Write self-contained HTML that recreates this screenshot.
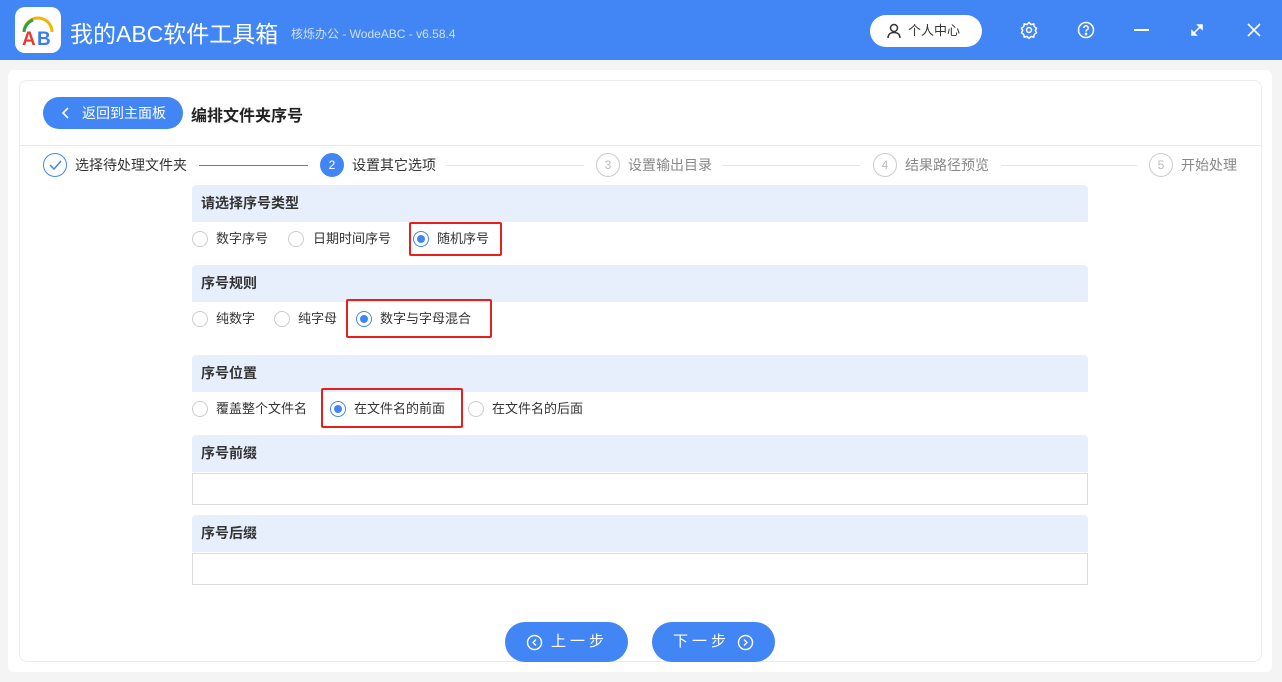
<!DOCTYPE html>
<html><head><meta charset="utf-8"><style>
*{margin:0;padding:0;box-sizing:border-box}
body{width:1282px;height:682px;background:#f4f4f4;font-family:"Liberation Sans","Noto Sans CJK SC",sans-serif;position:relative;overflow:hidden;color:#333}
.abs{position:absolute}
.top{left:0;top:0;width:1282px;height:60px;background:#4286f5}
.logo{left:15px;top:7px;width:46px;height:46px;background:#fff;border-radius:10px}
.title{left:70px;top:15px;color:#fff;font-size:23px}
.sub{left:291px;top:25px;color:#cfe0fc;font-size:12px}
.user{left:870px;top:15px;width:112px;height:32px;background:#fff;border-radius:16px;font-size:13px;color:#333;line-height:32px;padding-left:38px}
.card{left:8px;top:70px;width:1264px;height:602px;background:#fff;border-radius:6px}
.inner{left:19px;top:80px;width:1243px;height:582px;border:1px solid #ececec;border-radius:8px}
.back{left:43px;top:97px;width:140px;height:32px;background:#4286f5;border-radius:16px;color:#fff;font-size:14px;line-height:32px;padding-left:39px}
.h{left:191px;top:102px;font-size:16px;font-weight:bold;color:#222}
.hr{left:20px;top:145px;width:1241px;height:1px;background:#ececec}
.step{top:154px;font-size:14px;line-height:22px}
.circ{top:153px;width:24px;height:24px;border-radius:50%;border:1px solid #ccc;font-size:12px;line-height:22px;text-align:center;color:#bbb}
.ln{top:165px;height:1px;background:#e6e6e6}
.sec{left:192px;width:896px;height:37px;background:#e8effc;font-size:14px;font-weight:bold;color:#333;line-height:37px;padding-left:9px;border-radius:4px 4px 0 0}
.opt{font-size:13px;color:#333;line-height:20px}
.rad{width:16px;height:16px;border-radius:50%;border:1px solid #ccc;background:#fff}
.rad.on{border-color:#4286f5}
.rad.on::after{content:"";position:absolute;left:3px;top:3px;width:8px;height:8px;border-radius:50%;background:#4286f5}
.red{border:2px solid #e8201c;border-radius:2px}
.inp{left:192px;width:896px;height:32px;border:1px solid #ddd;background:#fff}
.btn{top:622px;width:123px;height:40px;background:#4286f5;border-radius:20px;color:#fff;font-size:15px;line-height:40px;letter-spacing:4px}
</style></head><body>
<div class="abs top"></div>
<div class="abs logo"><svg width="46" height="46"><path d="M9 25 A14 14 0 0 1 37 25" stroke="#f2b600" stroke-width="3" fill="none"/><path d="M9 25 A14 14 0 0 1 18 13" stroke="#2ca24c" stroke-width="3" fill="none"/><text x="7" y="38" font-size="19" font-weight="bold" fill="#e83a2f" font-family="Liberation Sans">A</text><text x="22" y="38" font-size="19" font-weight="bold" fill="#3b7df0" font-family="Liberation Sans">B</text></svg></div>
<div class="abs title">我的ABC软件工具箱</div>
<div class="abs sub">核烁办公 - WodeABC - v6.58.4</div>
<div class="abs user">个人中心</div>
<svg class="abs" style="left:886px;top:23px" width="16" height="16" fill="none" stroke="#333" stroke-width="1.5"><circle cx="8" cy="5" r="3.5"/><path d="M2 15c0-4 3-5.5 6-5.5s6 1.5 6 5.5"/></svg>
<svg class="abs" style="left:1020px;top:21px" width="18" height="18" fill="none" stroke="#fff" stroke-width="1.5"><circle cx="9" cy="9" r="2.5"/><path d="M9 1.5l2 2 2.7-.6.6 2.7 2.2 1.6-1.2 2.3 1.2 2.3-2.2 1.6-.6 2.7-2.7-.6-2 2-2-2-2.7.6-.6-2.7-2.2-1.6 1.2-2.3-1.2-2.3 2.2-1.6.6-2.7 2.7.6z"/></svg>
<svg class="abs" style="left:1077px;top:21px" width="18" height="18" fill="none" stroke="#fff" stroke-width="1.5"><circle cx="9" cy="9" r="7.5"/><path d="M6.8 7a2.2 2.2 0 1 1 3 2c-.7.3-.8.8-.8 1.6"/><circle cx="9" cy="13" r=".6" fill="#fff"/></svg>
<div class="abs" style="left:1134px;top:29px;width:15px;height:2px;background:#fff"></div>
<svg class="abs" style="left:1190px;top:23px" width="14" height="14" stroke="#fff" stroke-width="1.5" fill="#fff"><path d="M2 12L12 2"/><path d="M2 12v-4l4 4z"/><path d="M12 2v4l-4-4z"/></svg>
<svg class="abs" style="left:1246px;top:22px" width="16" height="16" stroke="#fff" stroke-width="1.6"><path d="M2 2l12 12M14 2L2 14"/></svg>
<div class="abs card"></div>
<div class="abs inner"></div>
<div class="abs back">返回到主面板</div>
<svg class="abs" style="left:61px;top:106px" width="10" height="14" fill="none" stroke="#fff" stroke-width="1.6"><path d="M7 2L2 7l5 5"/></svg>
<div class="abs h">编排文件夹序号</div>
<div class="abs hr"></div>
<div class="abs circ" style="left:43px;border-color:#4286f5"><svg width="22" height="22" fill="none" stroke="#4286f5" stroke-width="1.5"><path d="M6 11l4 4 7-8"/></svg></div>
<div class="abs step" style="left:75px">选择待处理文件夹</div>
<div class="abs ln" style="left:199px;width:109px;background:#4286f5"></div>
<div class="abs circ" style="left:320px;background:#4286f5;border-color:#4286f5;color:#fff">2</div>
<div class="abs step" style="left:352px">设置其它选项</div>
<div class="abs ln" style="left:446px;width:138px"></div>
<div class="abs circ" style="left:596px">3</div>
<div class="abs step" style="left:628px;color:#888">设置输出目录</div>
<div class="abs ln" style="left:722px;width:138px"></div>
<div class="abs circ" style="left:873px">4</div>
<div class="abs step" style="left:905px;color:#888">结果路径预览</div>
<div class="abs ln" style="left:1001px;width:136px"></div>
<div class="abs circ" style="left:1149px">5</div>
<div class="abs step" style="left:1181px;color:#888">开始处理</div>

<div class="abs sec" style="top:185px">请选择序号类型</div>
<div class="abs rad" style="left:192px;top:231px"></div><div class="abs opt" style="left:216px;top:229px">数字序号</div>
<div class="abs rad" style="left:288px;top:231px"></div><div class="abs opt" style="left:313px;top:229px">日期时间序号</div>
<div class="abs rad on" style="left:413px;top:231px"></div><div class="abs opt" style="left:437px;top:229px">随机序号</div>
<div class="abs red" style="left:409px;top:222px;width:93px;height:34px"></div>

<div class="abs sec" style="top:265px">序号规则</div>
<div class="abs rad" style="left:192px;top:311px"></div><div class="abs opt" style="left:216px;top:309px">纯数字</div>
<div class="abs rad" style="left:274px;top:311px"></div><div class="abs opt" style="left:298px;top:309px">纯字母</div>
<div class="abs rad on" style="left:356px;top:311px"></div><div class="abs opt" style="left:380px;top:309px">数字与字母混合</div>
<div class="abs red" style="left:346px;top:299px;width:146px;height:39px"></div>

<div class="abs sec" style="top:355px">序号位置</div>
<div class="abs rad" style="left:192px;top:401px"></div><div class="abs opt" style="left:216px;top:399px">覆盖整个文件名</div>
<div class="abs rad on" style="left:330px;top:401px"></div><div class="abs opt" style="left:354px;top:399px">在文件名的前面</div>
<div class="abs rad" style="left:468px;top:401px"></div><div class="abs opt" style="left:492px;top:399px">在文件名的后面</div>
<div class="abs red" style="left:321px;top:388px;width:142px;height:40px"></div>

<div class="abs sec" style="top:435px">序号前缀</div>
<div class="abs inp" style="top:473px"></div>
<div class="abs sec" style="top:515px">序号后缀</div>
<div class="abs inp" style="top:553px"></div>

<div class="abs btn" style="left:505px;padding-left:46px">上一步</div>
<svg class="abs" style="left:526px;top:634px" width="17" height="17" fill="none" stroke="#fff" stroke-width="1.4"><circle cx="8.5" cy="8.5" r="7"/><path d="M10 5.5l-3 3 3 3"/></svg>
<div class="abs btn" style="left:652px;padding-left:21px">下一步</div>
<svg class="abs" style="left:737px;top:634px" width="17" height="17" fill="none" stroke="#fff" stroke-width="1.4"><circle cx="8.5" cy="8.5" r="7"/><path d="M7 5.5l3 3-3 3"/></svg>
</body></html>
